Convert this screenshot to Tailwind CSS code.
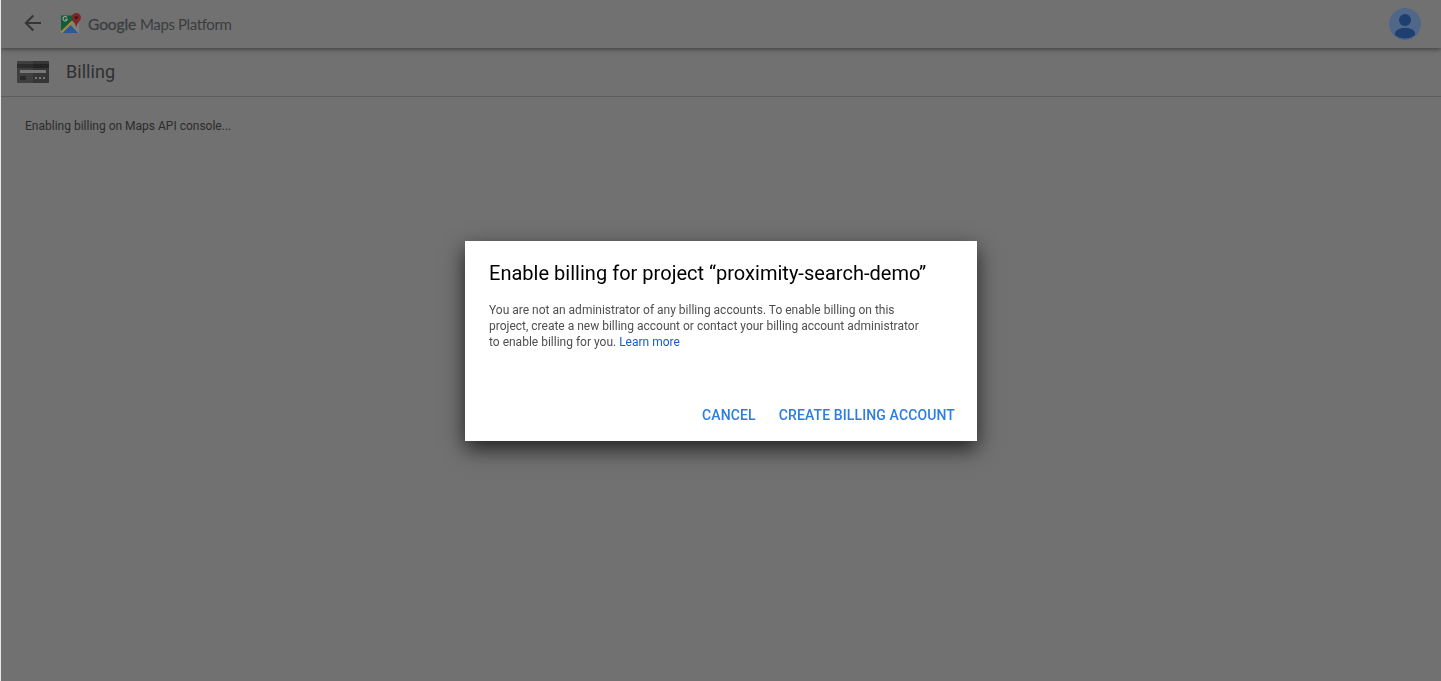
<!DOCTYPE html>
<html lang="en">
<head>
<meta charset="utf-8">
<title>Billing</title>
<script src="https://cdn.jsdelivr.net/npm/@tailwindcss/browser@4"></script>
</head>
<body class="h-screen overflow-hidden border-l border-[#e8e8e8] bg-[#717171] font-[Roboto,sans-serif]">
<header class="relative flex h-12 items-center bg-[#717171] pr-5 pl-[23px] shadow-[0_1px_5px_rgba(0,0,0,0.5)]">
  <svg class="size-[18px] -translate-y-px" viewBox="0 0 18 18" fill="none" stroke="#353535" stroke-width="2"><path d="M17 9H2M9.300 1.500L1.800 9l7.500 7.500"/></svg>
  <svg class="ml-[18px] h-6 w-[22px] -translate-y-px" viewBox="0 0 22 24">
    <path fill="#145c38" d="M1 4.500h18v17.500H1z"/>
    <path fill="#808080" d="M19 10v12L11 13z"/>
    <path fill="#a08a3e" d="M1 20L12 9.500l2.500 2.500L4 22H1z"/>
    <path fill="#2c5798" d="M2.500 22l8-8 7.500 8z"/>
    <path fill="#808080" d="M10.500 14l2.300-2.300L19 18.500V22h-1z"/>
    <path fill="#7d2727" d="M16.300 2a4.600 4.600 0 0 1 4.600 4.600c0 3.600-3.700 4.600-4.600 10.200-.9-5.600-4.600-6.600-4.600-10.200A4.600 4.600 0 0 1 16.300 2z"/>
    <circle cx="16.300" cy="6.600" r="1.600" fill="#451414"/>
    <path fill="none" stroke="#a5a5a5" stroke-width="1.100" d="M6.900 6.400A2.200 2.200 0 1 0 7.300 8.200H5.200"/>
  </svg>
  <div class="ml-[6px] flex gap-[4px] font-[Lato,sans-serif] text-[15.500px] leading-5 text-[#3b3d40]"><span class="w-12 tracking-[-0.100px] [-webkit-text-stroke:0.3px_#3b3d40]">Google</span><span class="text-[15px] tracking-[-0.380px]">Maps Platform</span></div>
  <svg class="ml-auto size-8" viewBox="0 0 32 32"><circle cx="16" cy="16" r="16" fill="#4f6788"/><circle cx="16" cy="12" r="6" fill="#1f3f70"/><path fill="#1f3f70" d="M6 27v-1.500c0-3.500 5-5.500 10-5.500s10 2 10 5.500V27a16 16 0 0 1-20 0z"/></svg>
</header>
<div class="flex h-[49px] items-center border-b border-[#5d5d5d] pl-4">
  <svg class="h-[22px] w-8" viewBox="0 0 32 22"><rect width="32" height="22" rx="1" fill="#3f3f3f"/><path fill="#363636" d="M16 0h15q1 0 1 1v20q0 1-1 1H16z"/><path fill="#2c2c2c" d="M0 3h16v4H0z"/><path fill="#242424" d="M16 3h16v4H16z"/><path fill="#777" d="M3 9h26v3H3zM18 16h2v2h-2zM22 16h2v2h-2zM26 16h2v2h-2z"/><path fill="#282828" d="M3 15h6v4H3z"/></svg>
  <h1 class="ml-[17px] text-lg tracking-[0.050px] text-[#303030]">Billing</h1>
</div>
<main class="pt-[21px] pl-6 text-xs leading-4 text-[#2c2c2c]">Enabling billing on Maps API console...</main>
<div class="fixed inset-0 flex items-start justify-center pt-[241px]">
  <section class="flex h-[200px] w-[512px] flex-col bg-white pr-[21.500px] pb-4 pl-[24.500px] shadow-[0_8px_20px_rgba(0,0,0,0.7)]">
    <h2 class="mt-[18px] text-xl leading-7 tracking-[0.020px] text-black">Enable billing for project “proximity-search-demo”</h2>
    <p class="mt-[15px] w-[440px] text-xs leading-4 text-[#4f4f4f]">You are not an administrator of any billing accounts. To enable billing on this<br>project, create a new billing account or contact your billing account administrator<br>to enable billing for you. <a class="text-[#1a5bd0]">Learn more</a></p>
    <div class="mt-auto flex justify-end gap-[23px] text-sm leading-5 font-medium tracking-[0.120px] text-[#2b7de2]"><button>CANCEL</button><button>CREATE BILLING ACCOUNT</button></div>
  </section>
</div>
</body>
</html>
